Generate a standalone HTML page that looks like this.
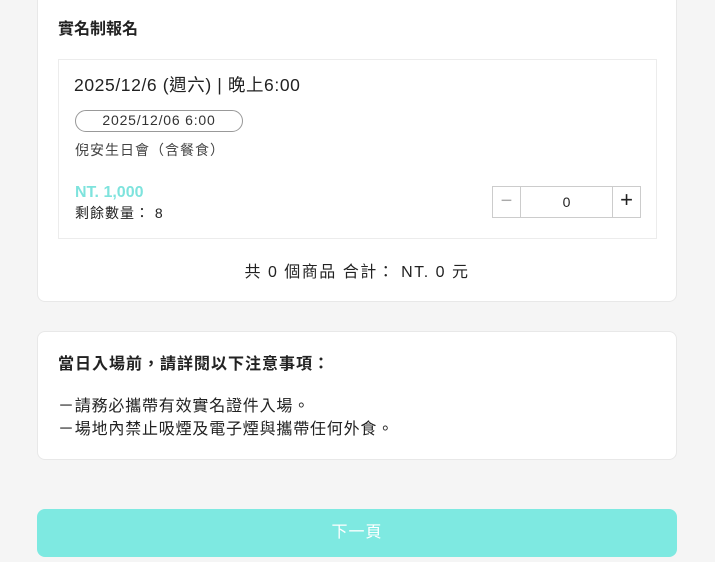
<!DOCTYPE html>
<html><head><meta charset="utf-8"><style>
body{margin:0;width:715px;height:562px;background:#f5f5f5;font-family:"Liberation Sans","Noto Sans CJK TC",sans-serif;color:#222;position:relative;overflow:hidden}
.card{position:absolute;left:37px;width:640px;background:#fff;border:1px solid #e8e8e8;border-radius:8px;box-sizing:border-box}
.abs{position:absolute;white-space:nowrap}
</style></head><body>
<div class="card" style="top:-10px;height:312px">
 <div class="abs" style="left:20px;top:24px;font-size:16px;font-weight:bold">實名制報名</div>
 <div class="abs" style="left:20px;top:68px;width:599px;height:180px;border:1px solid #ececec;box-sizing:border-box">
  <div class="abs" style="left:15px;top:12px;font-size:17.5px;letter-spacing:0.6px">2025/12/6 (週六) | 晚上6:00</div>
  <div class="abs" style="left:16px;top:50px;width:168px;height:22px;border:1px solid #999;border-radius:11px;box-sizing:border-box;font-size:14px;text-align:center;line-height:18px;color:#333;letter-spacing:.8px">2025/12/06 6:00</div>
  <div class="abs" style="left:16px;top:80px;font-size:14px;color:#444;letter-spacing:1px">倪安生日會（含餐食）</div>
  <div class="abs" style="left:16px;top:124px;font-size:16px;font-weight:bold;color:#7ee3dd">NT. 1,000</div>
  <div class="abs" style="left:16px;top:143px;font-size:14px;letter-spacing:1px">剩餘數量： 8</div>
  <div class="abs" style="left:433px;top:126px;width:149px;height:32px;border:1px solid #ccc;box-sizing:border-box;display:flex">
   <div style="width:27px;border-right:1px solid #ccc;color:#aaa;text-align:center;line-height:28px;font-size:20px">−</div>
   <div style="flex:1;text-align:center;line-height:30px;font-size:14px">0</div>
   <div style="width:27px;border-left:1px solid #ccc;text-align:center;line-height:26px;font-size:22px">+</div>
  </div>
 </div>
 <div class="abs" style="left:0;width:638px;text-align:center;top:267px;font-size:16px;letter-spacing:1.5px">共 0 個商品 合計： NT. 0 元</div>
</div>
<div class="card" style="top:331px;height:129px">
 <div class="abs" style="left:20px;top:18px;font-size:16px;font-weight:bold;letter-spacing:1px">當日入場前，請詳閱以下注意事項：</div>
 <div class="abs" style="left:20px;top:63px;font-size:16px;letter-spacing:0.8px;line-height:23px">－請務必攜帶有效實名證件入場。<br>－場地內禁止吸煙及電子煙與攜帶任何外食。</div>
</div>
<div class="abs" style="left:37px;top:509px;width:640px;height:48px;background:#7ee9e1;border-radius:8px;color:#fff;font-size:16px;text-align:center;line-height:48px;letter-spacing:1px">下一頁</div>
</body></html>
